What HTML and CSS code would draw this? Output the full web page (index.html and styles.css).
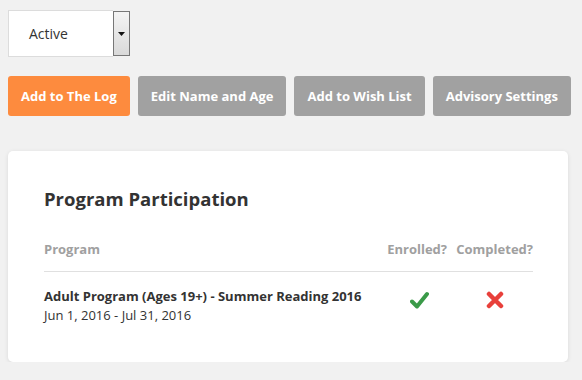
FILE: index.html
```html
<!DOCTYPE html>
<html>
<head>
<meta charset="utf-8">
<link rel="stylesheet" href="styles.css">
</head>
<body>
<div class="page">
  <div class="select">
    <span class="select-value">Active</span>
    <span class="select-arrow"><svg width="7" height="4" viewBox="0 0 7 4"><path d="M0 0H7L3.5 4Z" fill="#111"/></svg></span>
  </div>
  <div class="actions">
    <button class="btn btn-primary">Add to The Log</button>
    <button class="btn">Edit Name and Age</button>
    <button class="btn">Add to Wish List</button>
    <button class="btn">Advisory Settings</button>
  </div>
  <div class="card">
    <h2 class="card-title">Program Participation</h2>
    <div class="table">
      <div class="row head">
        <div class="col-name">Program</div>
        <div class="col-enr">Enrolled?</div>
        <div class="col-comp">Completed?</div>
      </div>
      <div class="row body">
        <div class="col-name">
          <div class="prog-name">Adult Program (Ages 19+) - Summer Reading 2016</div>
          <div class="prog-date">Jun 1, 2016 - Jul 31, 2016</div>
        </div>
        <div class="col-enr icon-cell">
          <svg width="19" height="19" viewBox="0 0 19 19"><path d="M2 10.5L7 15.5L17 3" fill="none" stroke="#3a9a48" stroke-width="4" stroke-linecap="round" stroke-linejoin="round"/></svg>
        </div>
        <div class="col-comp icon-cell">
          <svg width="18" height="18" viewBox="0 0 18 18"><path d="M3 3L15 15M15 3L3 15" fill="none" stroke="#e8403b" stroke-width="4.5" stroke-linecap="round"/></svg>
        </div>
      </div>
    </div>
  </div>
</div>
</body>
</html>
```

FILE: styles.css
```css
html, body {
  margin: 0;
  padding: 0;
  background: #f1f1f1;
}
body {
  font-family: "Open Sans", "Lato", sans-serif;
  color: #333;
}
.page {
  padding: 10px 14px 0 8px;
}
.select {
  display: flex;
  width: 122px;
  height: 47px;
  box-sizing: border-box;
}
.select-value {
  flex: 1;
  background: #fff;
  border: 1px solid #dcdcdc;
  border-right: none;
  display: flex;
  align-items: center;
  padding-left: 20px;
  font-size: 14px;
  color: #333;
}
.select-arrow {
  width: 17px;
  box-sizing: border-box;
  border: 1px solid #777;
  margin: 1px 0;
  background: linear-gradient(#f4f4f4, #d9d9d9);
  display: flex;
  align-items: center;
  justify-content: center;
}
.actions {
  display: flex;
  gap: 8px;
  margin-top: 19px;
}
.btn {
  flex: none;
  white-space: nowrap;
  height: 40px;
  border: none;
  border-radius: 3px;
  background: #a1a1a1;
  color: #fff;
  font-family: inherit;
  font-weight: 700;
  font-size: 13px;
  padding: 0 13px;
}
.btn-primary {
  background: #fd8b3e;
}
.card {
  margin-top: 35px;
  background: #fff;
  border-radius: 5px;
  box-shadow: 0 1px 4px rgba(0,0,0,0.1);
  padding: 36px 35px 38px 36px;
}
.card-title {
  margin: 0;
  font-size: 18.5px;
  font-weight: 700;
  color: #333;
  line-height: 24px;
}
.table {
  margin-top: 29px;
}
.row {
  display: flex;
}
.row.head {
  font-size: 13px;
  font-weight: 700;
  color: #a0a0a0;
  padding-bottom: 13px;
  border-bottom: 1px solid #e0e0e0;
}
.col-name {
  flex: 1;
}
.col-enr {
  width: 76px;
  text-align: right;
}
.col-comp {
  width: 86px;
  text-align: right;
}
.row.body {
  padding-top: 15px;
  font-size: 13px;
}
.prog-name {
  font-weight: 700;
  color: #333;
}
.prog-date {
  margin-top: 1px;
  color: #333;
}
.icon-cell {
  display: flex;
  align-items: flex-start;
}
.icon-cell svg {
  margin-top: 4px;
}
.row.body .col-enr {
  padding-left: 39px;
  box-sizing: border-box;
}
.row.body .col-comp {
  padding-left: 39px;
  box-sizing: border-box;
}
```
